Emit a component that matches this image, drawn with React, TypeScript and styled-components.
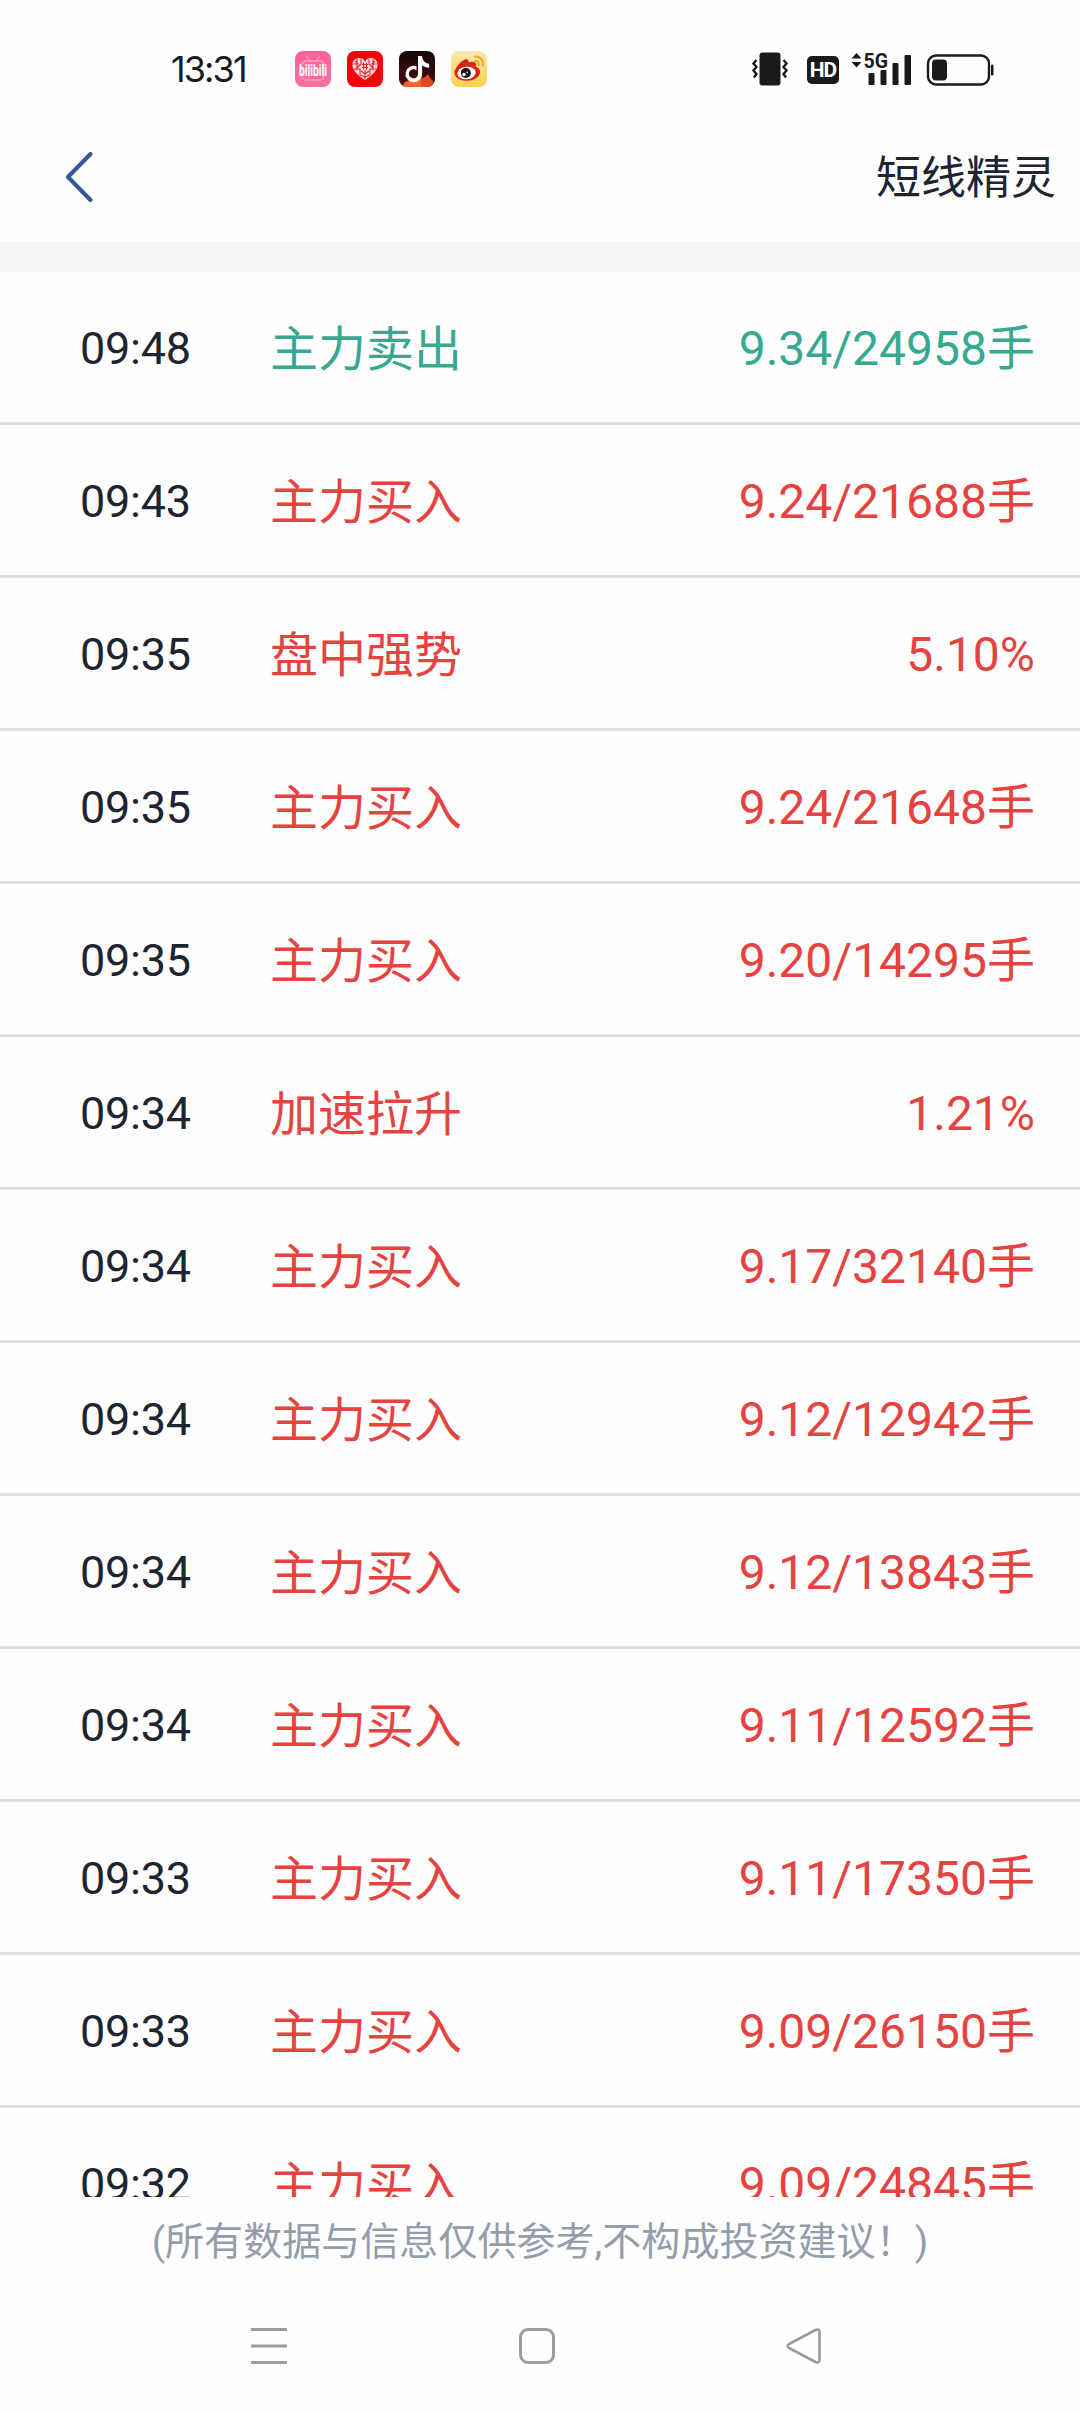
import React from 'react';
import styled, { createGlobalStyle } from 'styled-components';

const GlobalStyle = createGlobalStyle`
  * { box-sizing: border-box; }
  body {
    margin: 0;
    background: #fefefe;
    font-family: Roboto, "Noto Sans CJK SC", sans-serif;
  }
  svg { display: block; flex: none; overflow: visible; }
`;

const Screen = styled.div`
  display: flex;
  flex-direction: column;
  width: 1080px;
  height: 2412px;
  overflow: hidden;
  background: #fefefe;
`;

const StatusBar = styled.header`
  display: flex;
  align-items: center;
  height: 112px;
  padding: 26px 86px 0 171px;
`;

const Clock = styled.time`
  width: 124px;
  font: 400 36px/44px Inter, sans-serif;
  letter-spacing: -1.9px;
  color: #1a1a1a;
  white-space: nowrap;
`;

const AppIcons = styled.div`
  display: flex;
  gap: 16px;
`;

const SystemIcons = styled.div`
  display: flex;
  align-items: center;
  margin-left: auto;
`;

const HdBadge = styled.span`
  display: flex;
  align-items: center;
  justify-content: center;
  width: 32px;
  height: 28px;
  margin: 2px 12px 0 19px;
  border-radius: 5px;
  background: #1a1a1a;
  color: #fff;
  font: 700 21px/28px Roboto, sans-serif;
  letter-spacing: -1px;
  white-space: nowrap;
`;

const TitleBar = styled.div`
  display: flex;
  align-items: center;
  justify-content: space-between;
  height: 130px;
  padding: 0 24px 0 65px;
`;

const BackButton = styled.button`
  padding: 0;
  border: 0;
  background: none;
`;

const Title = styled.h1`
  margin: 4px 0 0;
  font-size: 45px;
  line-height: 66px;
  font-weight: 400;
  color: #1e2430;
`;

const Divider = styled.div`
  height: 30px;
  flex: none;
  background: #f3f4f6;
`;

const List = styled.ul`
  height: 1925px;
  margin: 0;
  padding: 0;
  list-style: none;
  overflow: hidden;
`;

const Row = styled.li<{ $down?: boolean }>`
  display: grid;
  grid-template-columns: 190px 1fr auto;
  align-items: center;
  height: 153px;
  padding: 4px 45px 0 80px;
  border-bottom: 3px solid #dfdfdf;
  font-size: 48px;
  line-height: 70px;
  color: ${(p) => (p.$down ? '#36aa91' : '#e64340')};
`;

const Time = styled.span`
  font-size: 45px;
  letter-spacing: -0.25px;
  color: #1e2430;
`;

const Label = styled.span`
  padding-top: 1px;
`;

const Value = styled.span`
  text-align: right;
`;

const Disclaimer = styled.p`
  margin: 0;
  padding-top: 17px;
  height: 100px;
  text-align: center;
  font-size: 39px;
  line-height: 57px;
  letter-spacing: 0.05px;
  color: #949dab;
  white-space: nowrap;
`;

const NavBar = styled.nav`
  display: flex;
  align-items: center;
  gap: 232px;
  height: 98px;
  padding-left: 251px;
`;

const events: [string, string, string, boolean?][] = [
  ['09:48', '主力卖出', '9.34/24958手', true],
  ['09:43', '主力买入', '9.24/21688手'],
  ['09:35', '盘中强势', '5.10%'],
  ['09:35', '主力买入', '9.24/21648手'],
  ['09:35', '主力买入', '9.20/14295手'],
  ['09:34', '加速拉升', '1.21%'],
  ['09:34', '主力买入', '9.17/32140手'],
  ['09:34', '主力买入', '9.12/12942手'],
  ['09:34', '主力买入', '9.12/13843手'],
  ['09:34', '主力买入', '9.11/12592手'],
  ['09:33', '主力买入', '9.11/17350手'],
  ['09:33', '主力买入', '9.09/26150手'],
  ['09:32', '主力买入', '9.09/24845手'],
];

const Bilibili = () => (
  <svg width="36" height="36" viewBox="0 0 36 36">
    <defs>
      <linearGradient id="pink" x1="0" y1="0" x2="0" y2="1">
        <stop offset="0" stopColor="#f8629a" />
        <stop offset="1" stopColor="#ff6f9f" />
      </linearGradient>
    </defs>
    <rect width="36" height="36" rx="8" fill="url(#pink)" />
    <g fill="none" stroke="#fb93b8" strokeWidth="1.8" strokeLinecap="round">
      <rect x="7" y="10" width="22" height="19" rx="4" />
      <path d="M12 6l3 4M24 6l-3 4" />
    </g>
    <text x="18" y="24.500" textAnchor="middle" textLength="28" lengthAdjust="spacingAndGlyphs" fontFamily="Roboto, sans-serif" fontWeight="700" fontSize="17" fill="#fff">
      bilibili
    </text>
  </svg>
);

const Heart = () => (
  <svg width="36" height="36" viewBox="0 0 36 36">
    <rect width="36" height="36" rx="8" fill="#f2050c" />
    <path d="M18 29C12 25 5.500 20 5.500 14 5.500 9 9 7 12 7c3 0 5 1.500 6 4 1-2.500 3-4 6-4 3 0 6.500 2 6.500 7 0 6-6.500 11-12.500 15z" fill="#fde4e4" />
    <g fill="none" stroke="#ee1a20" strokeWidth="1.100">
      <path d="M10 7.500v12M14 8v5l-4 4M6 13h5l-3-3M26 7.500v12M22 8v5l4 4M30 13h-5l3-3M7 18h6v6M29 18h-6v6M15 13.500h6M15 16.500h6M16.500 11.500v7M19.500 11.500v7M18 19v9M14 20l4 3 4-3M13 24l5 2 5-2" />
    </g>
  </svg>
);

const Douyin = () => (
  <svg width="36" height="36" viewBox="0 0 36 36">
    <defs>
      <clipPath id="tile"><rect width="36" height="36" rx="8" /></clipPath>
      <linearGradient id="night" x1="0" y1="0" x2="0" y2="1">
        <stop offset="0" stopColor="#160606" />
        <stop offset="1" stopColor="#4a0e0a" />
      </linearGradient>
    </defs>
    <g clipPath="url(#tile)">
      <rect width="36" height="36" fill="url(#night)" />
      <path d="M3 36l3-5 3-1 3-4 5 3 4-2 4 1 3-3 3 4 2 1 1 6z" fill="#f4642a" />
      <path d="M22 28l4-2 3-3 2 4 3 3v6H22z" fill="#dd4a20" />
    </g>
    <path d="M17.500 15.200v4.200A4.600 4.600 0 1 0 19 23.300V5h4c.4 4.500 2.600 7.200 7.200 7.800v4c-3-.1-5.300-1-7.100-2.500v8.900a8.300 8.300 0 1 1-5.600-8z" fill="#fff" />
  </svg>
);

const Weibo = () => (
  <svg width="36" height="36" viewBox="0 0 36 36">
    <defs>
      <linearGradient id="sun" x1="0" y1="0" x2="0" y2="1">
        <stop offset="0" stopColor="#fbe9ae" />
        <stop offset="1" stopColor="#fbd04a" />
      </linearGradient>
    </defs>
    <rect width="36" height="36" rx="8" fill="url(#sun)" />
    <path d="M3.500 22c0-4.500 5.500-11.500 10.500-13.500 2.500-1 4 .5 3.500 3 3-1.300 7.300-1.500 7.500 2 0 1-.3 1.700-.3 2.300C27.500 16.700 29 18.500 29 21c0 5-6 8.800-13 8.800S3.500 26.500 3.500 22z" fill="#dc2118" />
    <ellipse cx="15.500" cy="22" rx="9.300" ry="6.200" fill="#fff" transform="rotate(-6 15.500 22)" />
    <circle cx="14.800" cy="22" r="5" fill="#111" />
    <circle cx="13" cy="23.500" r="1.700" fill="#fff" />
    <circle cx="16.200" cy="21.200" r=".8" fill="#fff" />
    <path d="M24 5.500c5.500-.3 8.500 3.700 7.700 9M24 10c2.700-.2 4 1.400 3.600 4" fill="none" stroke="#eea52c" strokeWidth="2.100" strokeLinecap="round" />
  </svg>
);

const Vibrate = () => (
  <svg width="36" height="34" viewBox="0 0 36 34">
    <rect x="7.500" y="0.500" width="21" height="33" rx="3" fill="#1a1a1a" />
    <path d="M4.500 7.500L1.500 11l3 3.500-3 3.500 3 3.500-2.500 3.500M31.500 7.500l3 3.500-3 3.500 3 3.500-3 3.500 2.500 3.500" transform="translate(0 .5)" fill="none" stroke="#1a1a1a" strokeWidth="2.400" />
  </svg>
);

const Signal = () => (
  <svg width="61" height="34" viewBox="0 0 61 34">
    <g fill="#1a1a1a">
      <path d="M5.500 1l5 5.500H.5zM5.500 15.500l5-5.500H.5z" />
      <text x="12.500" y="16" fontFamily="Roboto, sans-serif" fontWeight="700" fontSize="20.500" textLength="24.500" lengthAdjust="spacingAndGlyphs">5G</text>
      <rect x="17.500" y="21" width="6" height="12" rx="1" />
      <rect x="29.500" y="18" width="6" height="15" rx="1" />
      <rect x="41.500" y="11" width="6" height="22" rx="1" />
      <rect x="53.500" y="3" width="6.500" height="30" rx="1" />
    </g>
  </svg>
);

const BatterySvg = styled.svg`
  margin: 1px 0 0 15px;
`;

const Battery = () => (
  <BatterySvg width="67" height="32" viewBox="0 0 67 32">
    <rect x="1" y="1.500" width="61" height="29" rx="8" fill="none" stroke="#1a1a1a" strokeWidth="2.400" />
    <rect x="5" y="5.500" width="15" height="21" rx="4" fill="#1a1a1a" />
    <rect x="64" y="10.500" width="2.500" height="11" rx="1.200" fill="#1a1a1a" />
  </BatterySvg>
);

export default function App() {
  return (
    <>
      <GlobalStyle />
      <Screen>
        <StatusBar>
          <Clock>13:31</Clock>
          <AppIcons>
            <Bilibili />
            <Heart />
            <Douyin />
            <Weibo />
          </AppIcons>
          <SystemIcons>
            <Vibrate />
            <HdBadge>HD</HdBadge>
            <Signal />
            <Battery />
          </SystemIcons>
        </StatusBar>
        <TitleBar>
          <BackButton aria-label="返回">
            <svg width="30" height="52" viewBox="0 0 30 52">
              <path d="M25.500 3L3 26l22.500 23" fill="none" stroke="#36599a" strokeWidth="4.200" strokeLinecap="round" strokeLinejoin="round" />
            </svg>
          </BackButton>
          <Title>短线精灵</Title>
        </TitleBar>
        <Divider />
        <List>
          {events.map(([time, label, value, down], i) => (
            <Row key={i} $down={down}>
              <Time>{time}</Time>
              <Label>{label}</Label>
              <Value>{value}</Value>
            </Row>
          ))}
        </List>
        <Disclaimer>(所有数据与信息仅供参考,不构成投资建议！)</Disclaimer>
        <NavBar>
          <svg width="36" height="36" viewBox="0 0 36 36">
            <path d="M0 1.500h36M0 18h36M0 34.500h36" stroke="#9c9c9c" strokeWidth="3" />
          </svg>
          <svg width="36" height="36" viewBox="0 0 36 36">
            <rect x="1.500" y="1.500" width="33" height="33" rx="7.500" fill="none" stroke="#9c9c9c" strokeWidth="3" />
          </svg>
          <svg width="36" height="36" viewBox="0 0 36 36">
            <path d="M28.500 2L2 16q-3 2 0 4l26.500 14q4 1.500 4-2V4q0-3.500-4-2z" fill="none" stroke="#9c9c9c" strokeWidth="2.600" strokeLinejoin="round" />
          </svg>
        </NavBar>
      </Screen>
    </>
  );
}
